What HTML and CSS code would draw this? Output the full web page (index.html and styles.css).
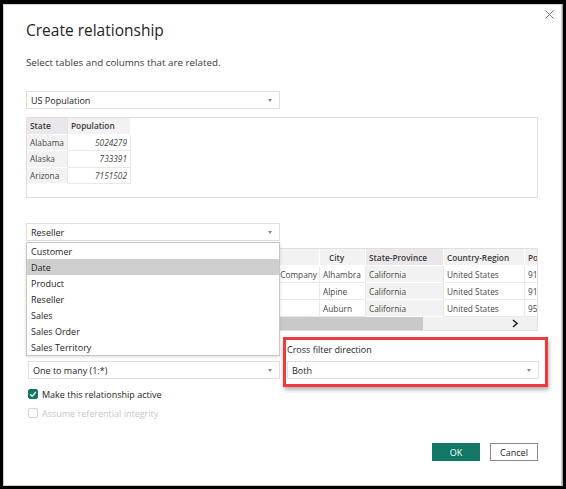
FILE: index.html
```html
<!DOCTYPE html>
<html lang="en">
<head>
<meta charset="utf-8">
<title>Create relationship</title>
<link rel="stylesheet" href="styles.css">
</head>
<body>
<div class="dialog">
  <button class="close" aria-label="Close">
    <svg width="9" height="9" viewBox="0 0 9 9"><path d="M0.5 0.5 L8.5 8.5 M8.5 0.5 L0.5 8.5" stroke="#7a7876" stroke-width="1" fill="none"/></svg>
  </button>
  <h1 class="title">Create relationship</h1>
  <p class="subtitle">Select tables and columns that are related.</p>

  <div class="select select-table"><span>US Population</span><span class="caret"></span></div>

  <div class="preview preview-1">
    <div class="grid grid-1">
      <div class="cell head key">State</div>
      <div class="cell head">Population</div>
      <div class="cell key">Alabama</div>
      <div class="cell num">5024279</div>
      <div class="cell key">Alaska</div>
      <div class="cell num">733391</div>
      <div class="cell key">Arizona</div>
      <div class="cell num">7151502</div>
    </div>
  </div>

  <div class="picker">
    <div class="select select-table"><span>Reseller</span><span class="caret"></span></div>
    <ul class="menu">
      <li>Customer</li>
      <li class="active">Date</li>
      <li>Product</li>
      <li>Reseller</li>
      <li>Sales</li>
      <li>Sales Order</li>
      <li>Sales Territory</li>
    </ul>
  </div>

  <div class="preview preview-2">
    <div class="grid grid-2">
      <div class="cell head">ResellerKey</div>
      <div class="cell head">Business Type</div>
      <div class="cell head">Reseller</div>
      <div class="cell head city">City</div>
      <div class="cell head keyhead">State-Province</div>
      <div class="cell head">Country-Region</div>
      <div class="cell head">Postal Code</div>

      <div class="cell">1</div>
      <div class="cell">Value Added Reseller</div>
      <div class="cell right">A Bike Company</div>
      <div class="cell">Alhambra</div>
      <div class="cell key">California</div>
      <div class="cell">United States</div>
      <div class="cell">91801</div>

      <div class="cell">2</div>
      <div class="cell">Specialty Bike Shop</div>
      <div class="cell">Bike Rentals</div>
      <div class="cell">Alpine</div>
      <div class="cell key">California</div>
      <div class="cell">United States</div>
      <div class="cell">91901</div>

      <div class="cell">3</div>
      <div class="cell">Warehouse</div>
      <div class="cell">Auburn Bikes</div>
      <div class="cell">Auburn</div>
      <div class="cell key">California</div>
      <div class="cell">United States</div>
      <div class="cell">95603</div>
    </div>
    <div class="hscroll">
      <div class="thumb"></div>
      <div class="track"></div>
      <div class="arrow">
        <svg width="8" height="9" viewBox="0 0 8 9"><path d="M2 1 L6 4.5 L2 8" stroke="#252423" stroke-width="1.6" fill="none"/></svg>
      </div>
    </div>
  </div>

  <div class="options">
    <div class="col">
      <div class="label">Cardinality</div>
      <div class="select"><span>One to many (1:*)</span><span class="caret"></span></div>
      <div class="check first">
        <span class="box checked">
          <svg width="10" height="10" viewBox="0 0 10 10"><path d="M2.2 5.2 L4.2 7.2 L7.9 3" stroke="#fff" stroke-width="1.3" fill="none"/></svg>
        </span>
        <span>Make this relationship active</span>
      </div>
      <div class="check disabled">
        <span class="box"></span>
        <span>Assume referential integrity</span>
      </div>
    </div>
    <div class="col col-right">
      <div class="label">Cross filter direction</div>
      <div class="select"><span>Both</span><span class="caret"></span></div>
      <div class="highlight"></div>
    </div>
  </div>

  <div class="actions">
    <button class="btn primary">OK</button>
    <button class="btn">Cancel</button>
  </div>
</div>
</body>
</html>
```

FILE: styles.css
```css
html, body {
  margin: 0;
  padding: 0;
}
body {
  width: 566px;
  height: 489px;
  overflow: hidden;
  background: #000;
  font-family: "Open Sans", "Noto Sans", sans-serif;
  color: #252423;
}
.dialog {
  position: relative;
  box-sizing: border-box;
  margin: 4px 0 0 3px;
  width: 559px;
  height: 482px;
  background: #fff;
  border: 1px solid #cfcdcb;
  box-shadow: 1px 0 0 #a9a7a5;
  padding: 15px 0 0 22px;
}
.close {
  position: absolute;
  top: 5px;
  right: 7px;
  width: 9px;
  height: 9px;
  padding: 0;
  border: 0;
  background: transparent;
  display: flex;
}
.title {
  margin: 0;
  font-size: 15.5px;
  font-weight: 400;
  line-height: 20px;
  color: #252423;
}
.subtitle {
  margin: 17px 0 0;
  font-size: 9.8px;
  line-height: 12px;
  color: #3b3a39;
}
.select {
  box-sizing: border-box;
  height: 18px;
  border: 1px solid #e1dfdd;
  background: #fff;
  display: flex;
  align-items: center;
  justify-content: space-between;
  padding: 0 7px 0 4px;
  font-size: 9px;
  color: #252423;
  white-space: nowrap;
}
.caret {
  width: 0;
  height: 0;
  border-left: 2.5px solid transparent;
  border-right: 2.5px solid transparent;
  border-top: 3px solid #8a8886;
}
.select-table {
  width: 254px;
}
.dialog > .select-table {
  margin-top: 22px;
}
.preview {
  box-sizing: border-box;
  width: 512px;
  border: 1px solid #e1dfdd;
  overflow: hidden;
  background: #fff;
}
.preview-1 {
  margin-top: 8px;
  height: 81px;
}
.preview-2 {
  margin-top: 7px;
  height: 83px;
}
.grid {
  display: grid;
  font-size: 8.3px;
  color: #484644;
}
.grid-1 {
  grid-template-columns: 41px 63px;
  grid-auto-rows: 16.5px;
}
.grid-2 {
  grid-template-columns: 60px 85px 148px 46px 78px 81px 50px;
  grid-auto-rows: 17px;
  width: 548px;
}
.cell {
  box-sizing: border-box;
  display: flex;
  align-items: center;
  padding: 0 3px;
  border-right: 1px solid #ebe9e8;
  border-bottom: 1px solid #ebe9e8;
  white-space: nowrap;
  overflow: hidden;
}
.head {
  background: #f4f1f4;
  font-weight: 600;
  color: #3b3a39;
  border-right-color: #fff;
  border-bottom-color: #fff;
}
.key {
  background: #f3f2f2;
  border-bottom-color: #fff;
  border-right-color: #e6e4e3;
}
.head.key,
.keyhead {
  background: #ebe6eb;
}
.num {
  justify-content: flex-end;
  font-style: italic;
}
.right {
  justify-content: flex-end;
  padding-right: 2px;
}
.city {
  padding-left: 9px;
}
.hscroll {
  display: flex;
  height: 13px;
  background: #f1f1f1;
}
.thumb {
  width: 396px;
  background: #cbc9c8;
}
.track {
  flex: 1;
}
.arrow {
  width: 26px;
  display: flex;
  align-items: center;
  justify-content: flex-start;
}
.picker {
  position: relative;
  margin-top: 25px;
  z-index: 2;
}
.menu {
  position: absolute;
  top: 19px;
  left: 0;
  box-sizing: border-box;
  width: 254px;
  margin: 0;
  padding: 0;
  list-style: none;
  background: #fff;
  border: 1px solid #c8c6c4;
  box-shadow: 0 1px 3px rgba(0, 0, 0, 0.15);
}
.menu li {
  height: 16px;
  line-height: 18px;
  padding-left: 4px;
  font-size: 9px;
  color: #252423;
}
.menu li.active {
  background: #cfcfcf;
}
.options {
  display: grid;
  grid-template-columns: 252px 252px;
  column-gap: 7px;
  margin-top: 13px;
  padding-left: 2px;
}
.col {
  position: relative;
}
.label {
  font-size: 9px;
  line-height: 12px;
  margin-bottom: 5px;
  color: #252423;
}
.check {
  display: flex;
  align-items: center;
  gap: 4px;
  height: 12px;
  font-size: 9px;
  color: #252423;
  margin-top: 7px;
}
.check.first {
  margin-top: 9px;
}
.box {
  box-sizing: border-box;
  width: 10px;
  height: 10px;
  border: 1px solid #d4d2d0;
  border-radius: 2px;
  display: flex;
}
.box.checked {
  background: #117865;
  border-color: #117865;
}
.box.checked svg {
  margin: -1px;
}
.check.disabled {
  color: #c8c6c4;
}
.highlight {
  position: absolute;
  left: -4px;
  top: -7px;
  width: 265px;
  height: 50px;
  box-sizing: border-box;
  border: 3px solid #f0393f;
  box-shadow: 1px 3px 4px rgba(0, 0, 0, 0.3);
  pointer-events: none;
}
.actions {
  display: flex;
  justify-content: flex-end;
  gap: 10px;
  width: 512px;
  margin-top: 24px;
}
.btn {
  box-sizing: border-box;
  width: 48px;
  height: 18px;
  padding: 0;
  border: 1px solid #8a8886;
  background: #fff;
  font-family: "Open Sans", "Noto Sans", sans-serif;
  font-size: 9px;
  color: #252423;
}
.btn.primary {
  background: #117865;
  border-color: #117865;
  color: #fff;
}
```
